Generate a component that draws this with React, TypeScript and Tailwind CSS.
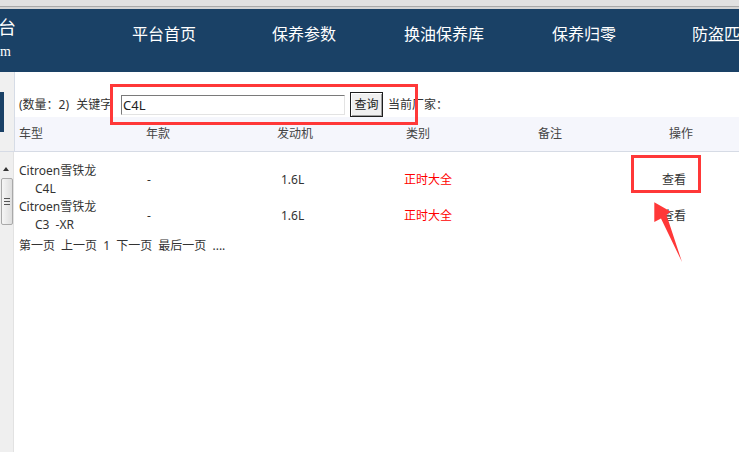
const navItems = ['平台首页', '保养参数', '换油保养库', '保养归零', '防盗匹配'];

const rows = [
  { brand: 'Citroen雪铁龙', model: 'C4L', year: '-', engine: '1.6L', type: '正时大全' },
  { brand: 'Citroen雪铁龙', model: 'C3 -XR', year: '-', engine: '1.6L', type: '正时大全' },
];

export default function App() {
  return (
    <div className="relative h-screen w-full overflow-hidden bg-white font-['Noto_Sans','Noto_Sans_CJK_SC',sans-serif] text-[12px] text-[#333] flex flex-col">
      <div className="h-[6px] flex-none bg-[#e1e1e1]" />
      <div className="h-[1px] flex-none bg-[#a9a9a9]" />
      <div className="h-[2px] flex-none bg-[#d4d4d4]" />

      <header className="flex h-[63px] flex-none overflow-hidden bg-[#1a4166] text-white">
        <div className="w-[16px] flex-none overflow-hidden">
          <div className="flex flex-col items-end">
            <div className="whitespace-nowrap pt-[6px] text-[18px] leading-[24px]">汽车维修技术平台</div>
            <div className="mt-[4px] whitespace-nowrap pr-[5px] font-['Liberation_Serif',serif] text-[14px] leading-[18px]">www.qcwxjs.com</div>
          </div>
        </div>
        <nav className="ml-[78px] flex">
          {navItems.map((item) => (
            <div key={item} className="w-[140px] flex-none whitespace-nowrap pt-[15px] text-center text-[16px] leading-[20px]">
              {item}
            </div>
          ))}
        </nav>
      </header>

      {/* top frame: search + column heads */}
      <div className="flex h-[80px] flex-none border-b border-[#d6dbe5]">
        <div className="w-[15px] flex-none border-r border-[#d6dce6] bg-[#f0f0f0]">
          <div className="mt-[20px] h-[40px] w-[4px] bg-[#1a4166]" />
        </div>
        <div className="flex flex-1 flex-col">
          <div className="mt-[20px] flex h-[25px] items-center pl-[4px] leading-[18px]">
            <span className="w-[99px] flex-none whitespace-nowrap [word-spacing:4px]">(数量：2) 关键字</span>
            <input
              className="ml-[3px] h-[20px] w-[224px] border border-t-[#7a7a7a] border-l-[#7a7a7a] border-b-[#e3e3e3] border-r-[#e3e3e3] px-[1px] text-[13px] text-[#222] outline-none"
              defaultValue="C4L"
            />
            <button className="ml-[5px] h-[25px] w-[33px] border border-[#1f1f1f] bg-[#f0f0f0] text-[12px] leading-[18px] text-[#222] shadow-[inset_1px_1px_0_#fff,inset_-1px_-1px_0_#a0a0a0]">
              查询
            </button>
            <span className="ml-[5px]">当前厂家：</span>
          </div>
          <div className="grid h-[34px] grid-cols-[127px_131px_129px_132px_131px_1fr] items-center bg-[#f5f6fc] pl-[4px] text-[#444]">
            <span>车型</span>
            <span>年款</span>
            <span>发动机</span>
            <span>类别</span>
            <span>备注</span>
            <span>操作</span>
          </div>
        </div>
      </div>

      {/* bottom frame: results */}
      <div className="flex flex-1">
        <div className="flex w-[14px] flex-none flex-col border-r border-[#e2e2e2] bg-[#efefef]">
          <div className="ml-[3px] mt-[15px] h-0 w-0 border-x-[3px] border-b-[4px] border-x-transparent border-b-[#333]" />
          <div className="ml-[1px] mt-[7px] flex h-[47px] w-[12px] flex-col items-center justify-center gap-[2px] rounded-[2px] border border-[#a9a9a9] bg-gradient-to-r from-[#f6f6f6] to-[#dedede]">
            <div className="h-[1px] w-[6px] bg-[#555]" />
            <div className="h-[1px] w-[6px] bg-[#555]" />
            <div className="h-[1px] w-[6px] bg-[#555]" />
          </div>
        </div>
        <div className="flex-1 pl-[5px] pt-[10px] leading-[18px] [word-spacing:3px]">
          {rows.map((r) => (
            <div key={r.model} className="grid h-[36px] grid-cols-[128px_134px_123px_258px_1fr] items-center">
              <div>
                <div>{r.brand}</div>
                <div className="pl-[16px]">{r.model}</div>
              </div>
              <span>{r.year}</span>
              <span>{r.engine}</span>
              <span className="text-[#ff0000]">{r.type}</span>
              <span>查看</span>
            </div>
          ))}
          <div className="mt-[3px] whitespace-nowrap">
            第一页 上一页 1 下一页 最后一页 <span className="[word-spacing:0]">....</span>
          </div>
        </div>
      </div>

      {/* annotations */}
      <div className="absolute left-[110px] top-[84px] h-[41px] w-[308px] border-[3px] border-[#ff3838]" />
      <div className="absolute left-[631px] top-[155px] h-[38px] w-[70px] border-[3px] border-[#ff3838]" />
      <svg className="absolute left-[650px] top-[198px]" width="40" height="70" viewBox="0 0 40 70">
        <polygon points="4.3,4.3 20.5,13.5 16.5,17 32,64 11,20.5 4.3,24" fill="#ff3838" />
      </svg>
    </div>
  );
}
